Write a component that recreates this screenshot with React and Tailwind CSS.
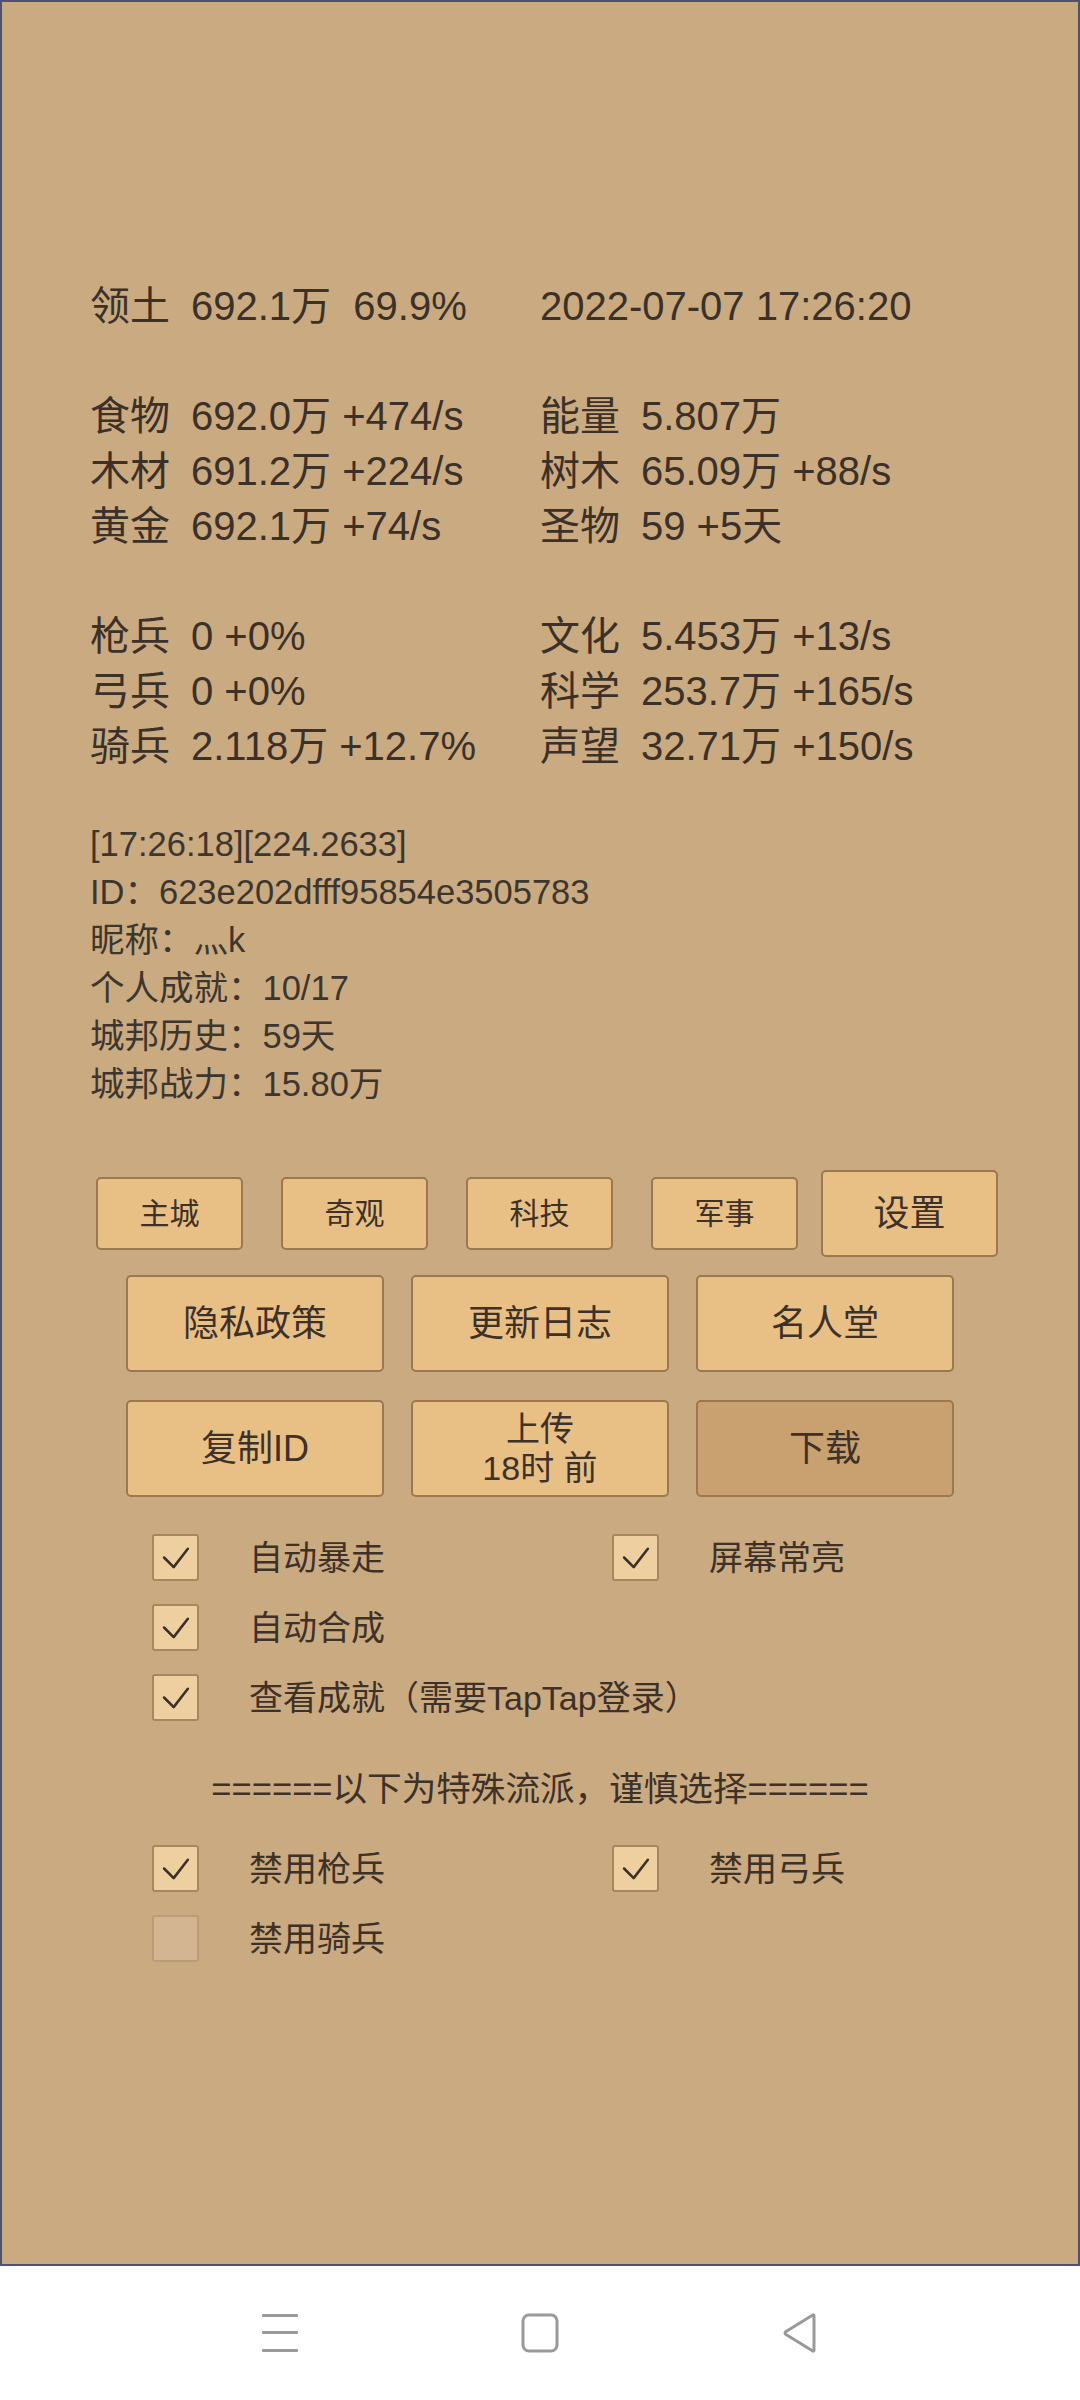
import React from "react";

const FONT = { fontFamily: '"Liberation Sans", Arial, "Noto Sans CJK SC", sans-serif' };

function StatRow({ l1, v1, l2, v2 }) {
  return (
    <div className="flex h-[55px] items-center leading-[55px]">
      <div className="flex w-[450px]">
        <span className="w-[101px]">{l1}</span>
        <span className="whitespace-pre">{v1}</span>
      </div>
      <div className="flex">
        {l2 !== undefined && <span className="w-[101px]">{l2}</span>}
        <span className="whitespace-pre">{v2}</span>
      </div>
    </div>
  );
}

function Btn({ children, className = "" }) {
  return (
    <div
      className={
        "flex items-center justify-center rounded-[5px] border-2 border-[#9c7850] text-[#3d3128] " +
        className
      }
    >
      {children}
    </div>
  );
}

function Check({ checked = true }) {
  return (
    <div
      className={
        "flex h-[47px] w-[47px] items-center justify-center rounded-[3px] border-2 " +
        (checked ? "border-[#a88660] bg-[#eed0a0]" : "border-[#bb9c78] bg-[#d3b592]")
      }
    >
      {checked && (
        <svg width="47" height="47" viewBox="0 0 47 47" fill="none">
          <path
            d="M11 23.5 L21.5 34 L37 14"
            stroke="#3a3028"
            strokeWidth="2.8"
            strokeLinecap="round"
            strokeLinejoin="round"
          />
        </svg>
      )}
    </div>
  );
}

function CheckItem({ label, checked = true }) {
  return (
    <div className="flex h-[47px] items-center">
      <Check checked={checked} />
      <span className="ml-[50px] text-[34px] leading-none text-[#3d3128]">{label}</span>
    </div>
  );
}

export default function App() {
  return (
    <div className="flex h-[2400px] w-[1080px] flex-col bg-white" style={FONT}>
      <div className="flex h-[2266px] flex-col border-2 border-[#4b5370] bg-[#caaa81] text-[#3b3129]">
        <div className="pl-[88px] pt-[277px] text-[40px]">
          <StatRow l1="领土" v1="692.1万  69.9%" v2="2022-07-07 17:26:20" />
          <div className="h-[55px]" />
          <StatRow l1="食物" v1="692.0万 +474/s" l2="能量" v2="5.807万" />
          <StatRow l1="木材" v1="691.2万 +224/s" l2="树木" v2="65.09万 +88/s" />
          <StatRow l1="黄金" v1="692.1万 +74/s" l2="圣物" v2="59 +5天" />
          <div className="h-[55px]" />
          <StatRow l1="枪兵" v1="0 +0%" l2="文化" v2="5.453万 +13/s" />
          <StatRow l1="弓兵" v1="0 +0%" l2="科学" v2="253.7万 +165/s" />
          <StatRow l1="骑兵" v1="2.118万 +12.7%" l2="声望" v2="32.71万 +150/s" />
        </div>

        <div className="mt-[46px] pl-[88px] text-[34.5px] leading-[48px] text-[#3d362e]">
          <div>[17:26:18][224.2633]</div>
          <div>ID：623e202dfff95854e3505783</div>
          <div>昵称：灬k</div>
          <div>个人成就：10/17</div>
          <div>城邦历史：59天</div>
          <div>城邦战力：15.80万</div>
        </div>

        <div className="mt-[62px] flex h-[87px] items-center pl-[94px]">
          <div className="flex gap-[38px]">
            <Btn className="h-[73px] w-[147px] bg-[#e8c086] text-[30px]">主城</Btn>
            <Btn className="h-[73px] w-[147px] bg-[#e8c086] text-[30px]">奇观</Btn>
            <Btn className="h-[73px] w-[147px] bg-[#e8c086] text-[30px]">科技</Btn>
            <Btn className="h-[73px] w-[147px] bg-[#e8c086] text-[30px]">军事</Btn>
          </div>
          <Btn className="ml-[23px] h-[87px] w-[177px] bg-[#e8c086] text-[36px]">设置</Btn>
        </div>

        <div className="mt-[18px] flex gap-[27px] pl-[124px]">
          <Btn className="h-[97px] w-[258px] bg-[#e8c086] text-[36px]">隐私政策</Btn>
          <Btn className="h-[97px] w-[258px] bg-[#e8c086] text-[36px]">更新日志</Btn>
          <Btn className="h-[97px] w-[258px] bg-[#e8c086] text-[36px]">名人堂</Btn>
        </div>

        <div className="mt-[28px] flex gap-[27px] pl-[124px]">
          <Btn className="h-[97px] w-[258px] bg-[#e8c086] text-[36px]">复制ID</Btn>
          <Btn className="h-[97px] w-[258px] flex-col bg-[#e8c086] text-[34px] leading-[39px]">
            <span>上传</span>
            <span>18时 前</span>
          </Btn>
          <Btn className="h-[97px] w-[258px] bg-[#c9a06f] text-[36px]">下载</Btn>
        </div>

        <div className="mt-[37px] flex flex-col gap-[23px] pl-[150px]">
          <div className="grid grid-cols-[460px_1fr]">
            <CheckItem label="自动暴走" />
            <CheckItem label="屏幕常亮" />
          </div>
          <CheckItem label="自动合成" />
          <CheckItem label="查看成就（需要TapTap登录）" />
        </div>

        <div className="mt-[44px] text-center text-[34.6px] leading-[48px] text-[#3d3128]">
          ======以下为特殊流派，谨慎选择======
        </div>

        <div className="mt-[32px] flex flex-col gap-[23px] pl-[150px]">
          <div className="grid grid-cols-[460px_1fr]">
            <CheckItem label="禁用枪兵" />
            <CheckItem label="禁用弓兵" />
          </div>
          <CheckItem label="禁用骑兵" checked={false} />
        </div>
      </div>

      <div className="flex flex-1 items-center justify-center gap-[222px] bg-white">
        <svg width="38" height="40" viewBox="0 0 38 40">
          <rect x="1" y="1" width="36" height="3" rx="1" fill="#9a9a9a" />
          <rect x="1" y="18" width="36" height="3" rx="1" fill="#9a9a9a" />
          <rect x="1" y="36" width="36" height="3" rx="1" fill="#9a9a9a" />
        </svg>
        <svg width="38" height="40" viewBox="0 0 38 40">
          <rect x="2" y="2" width="34" height="36" rx="6" fill="none" stroke="#9a9a9a" strokeWidth="3" />
        </svg>
        <svg width="38" height="40" viewBox="0 0 38 40">
          <path
            d="M33 3 L33 37 Q33 39 31 37.5 L5 21.5 Q3 20 5 18.5 L31 2.5 Q33 1 33 3 Z"
            fill="none"
            stroke="#9a9a9a"
            strokeWidth="3"
            strokeLinejoin="round"
          />
        </svg>
      </div>
    </div>
  );
}
